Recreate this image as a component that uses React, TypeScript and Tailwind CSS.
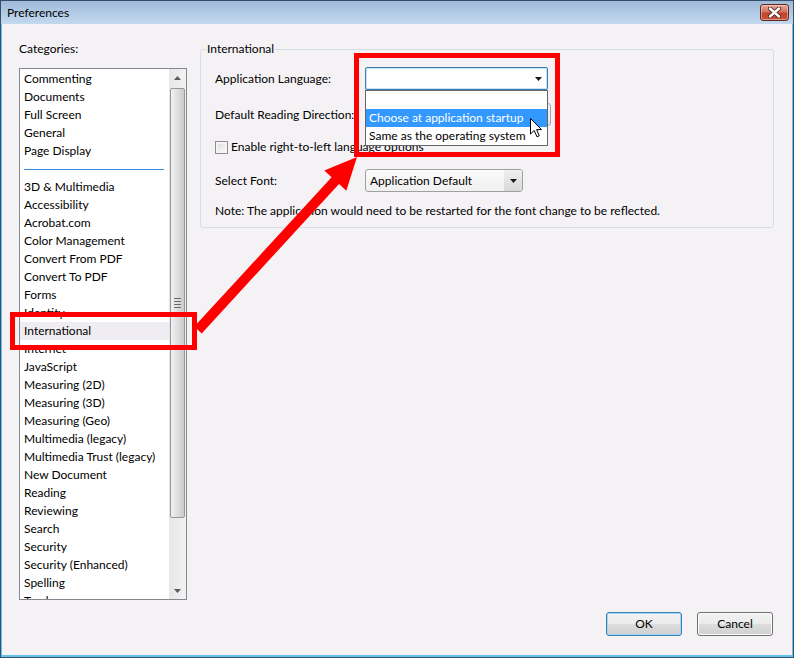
import React from 'react';

const TOP_CATEGORIES = ['Commenting', 'Documents', 'Full Screen', 'General', 'Page Display'];
const CATEGORIES = [
  '3D & Multimedia',
  'Accessibility',
  'Acrobat.com',
  'Color Management',
  'Convert From PDF',
  'Convert To PDF',
  'Forms',
  'Identity',
  'International',
  'Internet',
  'JavaScript',
  'Measuring (2D)',
  'Measuring (3D)',
  'Measuring (Geo)',
  'Multimedia (legacy)',
  'Multimedia Trust (legacy)',
  'New Document',
  'Reading',
  'Reviewing',
  'Search',
  'Security',
  'Security (Enhanced)',
  'Spelling',
  'Tracker',
];

function DownTriangle() {
  return (
    <svg width="7" height="4" viewBox="0 0 7 4">
      <polygon points="0,0 7,0 3.5,4" fill="#1a1a1a" />
    </svg>
  );
}

function ScrollArrow({ up }: { up?: boolean }) {
  return (
    <div className="h-[17px] flex items-center justify-center">
      <svg width="7" height="4" viewBox="0 0 7 4">
        <polygon points={up ? '0,4 7,4 3.5,0' : '0,0 7,0 3.5,4'} fill="#5a5a5a" />
      </svg>
    </div>
  );
}

function CloseButton() {
  return (
    <div className="w-[29px] h-[17px] rounded-[3px] border border-[#5c2a24] bg-[linear-gradient(#e9a898,#d2735e_45%,#c0432c_55%,#c9553c)] flex items-center justify-center shadow-[inset_0_0_0_1px_rgba(255,220,210,0.5)]">
      <svg width="13" height="11" viewBox="0 0 13 11">
        <path d="M2 1.5 L11 9.5 M11 1.5 L2 9.5" stroke="#4a2420" strokeWidth="4.2" strokeLinecap="round" />
        <path d="M2 1.5 L11 9.5 M11 1.5 L2 9.5" stroke="#ffffff" strokeWidth="2.4" strokeLinecap="round" />
      </svg>
    </div>
  );
}

function Button({ label, focused }: { label: string; focused?: boolean }) {
  return (
    <div
      className={`w-[76px] h-[24px] rounded-[3px] border flex items-center justify-center bg-[linear-gradient(#f2f2f2,#ebebeb_50%,#dddddd_50%,#cfcfcf)] ${
        focused
          ? 'border-[#3c7fb1] shadow-[inset_0_0_0_1px_#9ed8f5]'
          : 'border-[#707070] shadow-[inset_0_0_0_1px_#fcfcfc]'
      }`}
    >
      {label}
    </div>
  );
}

function Cursor() {
  return (
    <svg width="13" height="20" viewBox="0 0 13 20" className="absolute left-[164px] top-[27px]">
      <path
        d="M0.5 0.5 L0.5 16 L4.2 12.5 L7 18.8 L9.3 17.8 L6.6 11.6 L11.5 11.6 Z"
        fill="#ffffff"
        stroke="#000000"
        strokeWidth="1"
        strokeLinejoin="miter"
      />
    </svg>
  );
}

export default function App() {
  return (
    <div className="relative w-[794px] h-[658px] flex flex-col border border-[#34506c] bg-[#b8d0ea] text-[12px] text-black font-['Lato','Noto_Sans',sans-serif] overflow-hidden">
      {/* title bar */}
      <div className="h-[23px] flex items-center justify-between pl-[6px] pr-[4px] bg-gradient-to-b from-[#9fbad8] to-[#c3d9ef]">
        <span className="leading-none">Preferences</span>
        <CloseButton />
      </div>

      {/* body */}
      <div className="flex-1 flex bg-[#f5f2f6] border-x border-b-2 border-[#62c2ec] pl-[17px] pr-[18px]">
        {/* categories */}
        <div className="w-[168px] pt-[17px] flex flex-col">
          <div className="leading-[16px] mb-[11px]">Categories:</div>
          <div className="h-[532px] border border-[#828790] bg-white flex overflow-hidden">
            <div className="flex-1 flex flex-col pt-[1px]">
              {TOP_CATEGORIES.map((c) => (
                <div key={c} className="h-[18px] shrink-0 leading-[18px] pl-[4px] whitespace-nowrap">
                  {c}
                </div>
              ))}
              <div className="h-[18px] shrink-0 flex items-center pl-[4px] pr-[5px]">
                <div className="h-px w-full bg-[#3d8ee0]" />
              </div>
              {CATEGORIES.map((c) => (
                <div
                  key={c}
                  className={`h-[18px] shrink-0 leading-[18px] pl-[4px] whitespace-nowrap ${
                    c === 'International' ? 'bg-[#efedf1]' : ''
                  }`}
                >
                  {c}
                </div>
              ))}
            </div>
            <div className="w-[17px] flex flex-col bg-gradient-to-r from-[#e6e6e6] to-[#f3f3f3]">
              <ScrollArrow up />
              <div className="mt-[2px] mx-[1px] h-[430px] rounded-[2px] border border-[#979797] bg-gradient-to-r from-[#f2f2f2] via-[#dedede] to-[#cbcbcb] flex items-center justify-center">
                <div className="flex flex-col gap-[2px]">
                  <div className="w-[7px] h-px bg-[#6a6a6a]" />
                  <div className="w-[7px] h-px bg-[#6a6a6a]" />
                  <div className="w-[7px] h-px bg-[#6a6a6a]" />
                  <div className="w-[7px] h-px bg-[#6a6a6a]" />
                </div>
              </div>
              <div className="flex-1" />
              <ScrollArrow />
            </div>
          </div>
        </div>

        {/* settings */}
        <div className="flex-1 ml-[13px] pt-[17px] flex flex-col">
          <fieldset className="border border-[#d5dfe5] rounded-[3px]">
            <legend className="ml-[5px] px-[1px] leading-[16px]">International</legend>
            <div className="pl-[14px] pt-[10px] pb-[8px]">
              <div className="h-[23px] flex items-center">
                <div className="w-[150px]">Application Language:</div>
                <div className="relative z-10 w-[183px] h-[23px] border border-[#3c7fb1] rounded-[2px] bg-white flex items-center justify-end pr-[5px] shadow-[inset_0_0_0_1px_#c5e3f7]">
                  <DownTriangle />
                  <div className="absolute left-[-1px] top-[22px] w-[183px] border border-[#646464] bg-white">
                    <div className="h-[18px]" />
                    <div className="h-[18px] leading-[18px] pl-[3px] bg-[#3399ff] text-white whitespace-nowrap">
                      Choose at application startup
                    </div>
                    <div className="h-[18px] leading-[18px] pl-[3px] whitespace-nowrap">
                      Same as the operating system
                    </div>
                    <Cursor />
                  </div>
                </div>
              </div>

              <div className="mt-[13px] h-[23px] flex items-center">
                <div className="w-[150px]">Default Reading Direction:</div>
                <div className="w-[186px] h-[23px] border border-[#a5a5a5] rounded-[3px] bg-[linear-gradient(#f6f6f6,#e4e4e4)]" />
              </div>

              <div className="mt-[13px] h-[16px] flex items-center">
                <div className="w-[13px] h-[13px] border border-[#8f8f8f] bg-[linear-gradient(135deg,#dcdcdc,#fbfbfb)] shadow-[inset_0_0_0_2px_#f4f4f4]" />
                <span className="ml-[3px]">Enable right-to-left language options</span>
              </div>

              <div className="mt-[14px] h-[23px] flex items-center">
                <div className="w-[150px]">Select Font:</div>
                <div className="w-[158px] h-[23px] border border-[#a0a0a0] rounded-[3px] bg-[linear-gradient(#fbfbfb,#f0f0f0)] flex items-center overflow-hidden">
                  <div className="flex-1 pl-[4px] whitespace-nowrap">Application Default</div>
                  <div className="w-[18px] h-full flex items-center justify-center bg-[linear-gradient(#f0f0f0,#d8d8d8)]">
                    <DownTriangle />
                  </div>
                </div>
              </div>

              <div className="mt-[11px] h-[16px] leading-[16px] whitespace-nowrap">
                Note: The application would need to be restarted for the font change to be reflected.
              </div>
            </div>
          </fieldset>

          <div className="flex-1" />
          <div className="flex justify-end gap-[15px] pr-[1px] pb-[19px]">
            <Button label="OK" focused />
            <Button label="Cancel" />
          </div>
        </div>
      </div>

      {/* red annotations */}
      <svg
        width="794"
        height="658"
        viewBox="0 0 794 658"
        className="absolute -left-px -top-px pointer-events-none z-20"
      >
        <rect x="12.5" y="314.5" width="182" height="33" fill="none" stroke="#ff0000" strokeWidth="5" />
        <rect x="356.5" y="55.5" width="201" height="99" fill="none" stroke="#ff0000" strokeWidth="5" />
        <polygon
          points="201.7,333.4 339,184 346.3,190.8 357,157 324.3,170.4 331.6,177.2 194.3,326.6"
          fill="#ff0000"
        />
      </svg>
    </div>
  );
}
